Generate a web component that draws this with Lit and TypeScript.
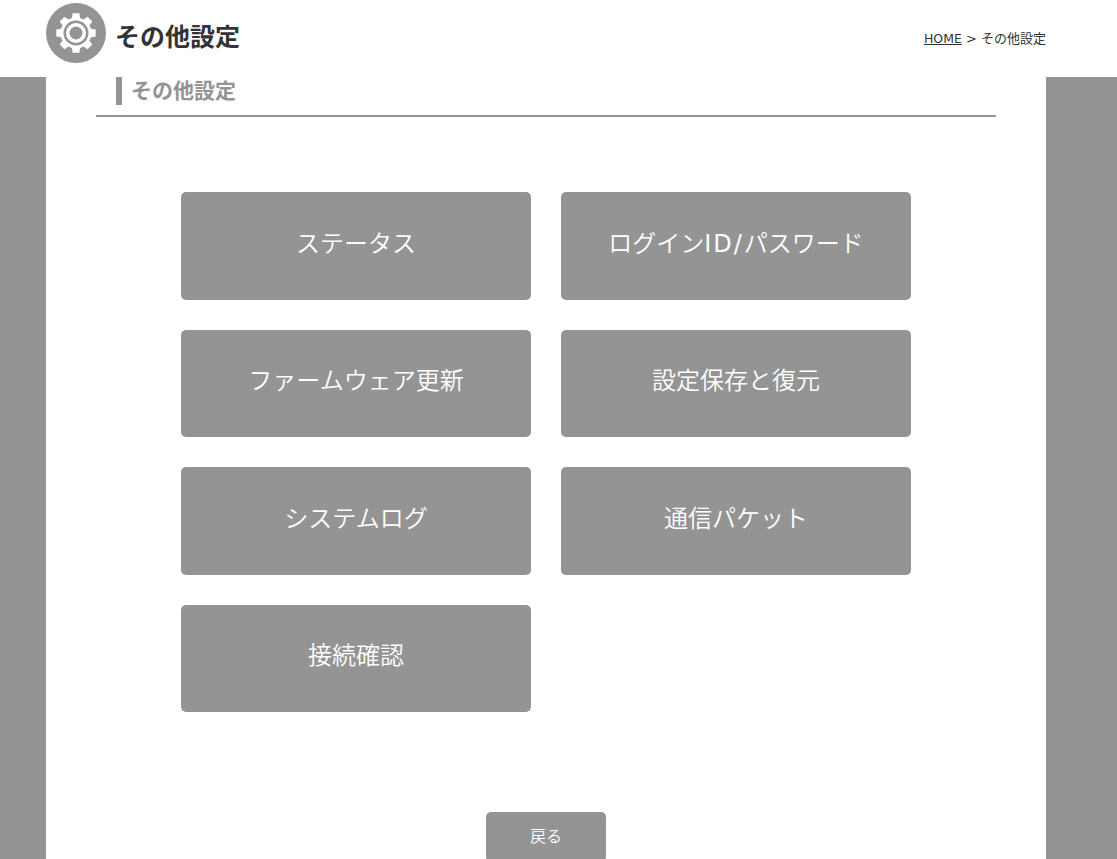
import { LitElement, html, css, svg } from 'lit';
import { customElement } from 'lit/decorators.js';

const MENU = [
  html`ステータス`,
  html`ログイン<span class="latin">ID/</span>パスワード`,
  html`ファームウェア更新`,
  html`設定保存と復元`,
  html`システムログ`,
  html`通信パケット`,
  html`接続確認`,
];

// 8 tooth gear outline, centred on 0,0
function gearPath(): string {
  const teeth = 8;
  const pts: string[] = [];
  const at = (r: number, a: number) => `${(r * Math.cos(a)).toFixed(2)} ${(r * Math.sin(a)).toFixed(2)}`;
  for (let i = 0; i < teeth; i++) {
    const c = (i * Math.PI * 2) / teeth - Math.PI / 2;
    pts.push(at(15.5, c - 0.27), at(20, c - 0.17), at(20, c + 0.17), at(15.5, c + 0.27));
  }
  return `M${pts.join('L')}Z`;
}

@customElement('app-root')
export class AppRoot extends LitElement {
  static styles = css`
    :host {
      display: block;
      height: 859px;
      overflow: hidden;
      background: #949494;
      font-family: 'DejaVu Sans', 'Noto Sans CJK JP', sans-serif;
      color: #333;
    }

    header {
      background: #fff;
      height: 77px;
    }

    .head-inner,
    main {
      width: 1000px;
      margin-left: 46px;
      box-sizing: border-box;
      background: #fff;
    }

    .head-inner {
      display: flex;
      justify-content: space-between;
      height: 77px;
    }

    .brand {
      display: flex;
      align-items: flex-start;
      gap: 9px;
      padding-top: 3px;
    }

    .brand svg {
      display: block;
    }

    .brand h1 {
      margin: 0;
      font-size: 25px;
      line-height: 70px;
      height: 60px;
      font-weight: 700;
      color: #333;
    }

    .crumbs {
      font-size: 13px;
      line-height: 20px;
      padding-top: 29px;
      color: #333;
    }

    .crumbs a {
      color: #333;
      text-decoration: underline;
      font-size: 12.5px;
    }

    main {
      height: 782px;
      padding: 0 50px;
    }

    .section {
      border-bottom: 2px solid #949494;
      height: 38px;
      padding-left: 20px;
      box-sizing: content-box;
    }

    .section h2 {
      margin: 0;
      height: 28px;
      border-left: 6px solid #949494;
      padding-left: 9px;
      font-size: 21px;
      line-height: 28px;
      font-weight: 700;
      color: #949494;
    }

    .grid {
      display: grid;
      grid-template-columns: 350px 350px;
      grid-auto-rows: 107.5px;
      gap: 30px;
      margin: 75px 0 0 85px;
    }

    .btn {
      display: flex;
      align-items: center;
      justify-content: center;
      padding-bottom: 9px;
      box-sizing: border-box;
      background: #949494;
      border-radius: 5px;
      color: #fff;
      font-size: 24px;
      font-weight: 350;
    }

    .latin {
      font-weight: 400;
      letter-spacing: 2px;
    }

    .foot {
      display: flex;
      justify-content: center;
      margin-top: 100px;
    }

    .back {
      width: 120px;
      height: 50px;
      line-height: 50px;
      text-align: center;
      background: #949494;
      border-radius: 5px;
      color: #fff;
      font-size: 16px;
      font-weight: 350;
    }
  `;

  render() {
    return html`
      <header>
        <div class="head-inner">
          <div class="brand">
            <svg width="60" height="60" viewBox="-30 -30 60 60">
              <circle r="30" fill="#949494"></circle>
              ${svg`<path d=${gearPath()} fill="#fff"></path>`}
              <circle r="12.5" fill="#949494"></circle>
              <circle r="10" fill="#fff"></circle>
              <circle r="6.5" fill="#949494"></circle>
            </svg>
            <h1>その他設定</h1>
          </div>
          <div class="crumbs"><a href="#">HOME</a> &gt; その他設定</div>
        </div>
      </header>
      <main>
        <div class="section"><h2>その他設定</h2></div>
        <div class="grid">
          ${MENU.map((label) => html`<div class="btn"><span>${label}</span></div>`)}
        </div>
        <div class="foot"><div class="back">戻る</div></div>
      </main>
    `;
  }
}
